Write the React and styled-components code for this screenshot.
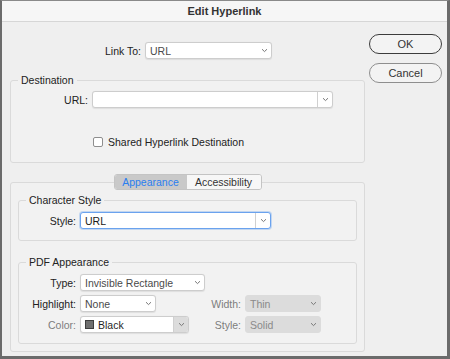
import React from 'react';
import styled, { createGlobalStyle, css } from 'styled-components';

const Global = createGlobalStyle`
  html, body { margin: 0; padding: 0; background: #efefef; }
  body { font-family: "Liberation Sans", Arial, sans-serif; font-size: 10.5px; color: #222; }
  * { box-sizing: border-box; }
`;

const Window = styled.div`
  width: 450px;
  height: 359px;
  background: #efefef;
  border-top: 1px solid #8a8a8a;
  border-left: 2px solid #6b6b6b;
  border-right: 3px solid #6b6b6b;
  border-bottom: 3px solid #6b6b6b;
  display: flex;
  flex-direction: column;
  overflow: hidden;
`;

const TitleBar = styled.div`
  height: 21px;
  flex: none;
  background: #f6f6f6;
  border-bottom: 1px solid #d6d6d6;
  text-align: center;
  font-weight: bold;
  font-size: 11px;
  line-height: 20px;
  color: #333;
`;

const Body = styled.div`
  display: flex;
  padding-left: 8px;
`;

const LeftCol = styled.div`
  width: 355px;
  display: flex;
  flex-direction: column;
`;

const RightCol = styled.div`
  width: 73px;
  margin-left: 4px;
  padding-top: 12px;
  display: flex;
  flex-direction: column;
  gap: 9px;
`;

const Button = styled.button`
  height: 20px;
  width: 73px;
  border-radius: 10px;
  background: #f3f3f3;
  font-family: inherit;
  font-size: 11px;
  color: #333;
  padding: 0;
  border: ${p => (p.$default ? '1.5px solid #3c3c3c' : '1px solid #8e8e8e')};
`;

const Row = styled.div`
  display: flex;
  align-items: center;
  gap: 4px;
  margin-top: ${p => p.$mt || 0}px;
  margin-left: ${p => p.$ml || 0}px;
`;

const Label = styled.span`
  width: ${p => p.$w}px;
  flex: none;
  text-align: right;
  color: ${p => (p.$disabled ? '#7d7d7d' : '#222')};
  white-space: nowrap;
`;

const Group = styled.fieldset`
  margin: ${p => p.$mt || 0}px 0 0 0;
  padding: ${p => p.$pt}px 0 ${p => p.$pb}px 0;
  min-width: 0;
  border: 1px solid #dadada;
  border-radius: 3px;
  background: rgba(255, 255, 255, 0.12);
`;

const Legend = styled.legend`
  margin-left: 7px;
  padding: 0 3px;
  line-height: 12px;
  font-size: 10.5px;
  color: #222;
`;

const SelectBox = styled.div`
  width: ${p => p.$w}px;
  height: 17px;
  flex: none;
  display: flex;
  align-items: stretch;
  border-radius: 3px;
  overflow: hidden;
  ${p =>
    p.$variant === 'disabled'
      ? css`
          background: #dcdcdc;
          border: 1px solid #dcdcdc;
          color: #8a8a8a;
        `
      : p.$variant === 'focus'
      ? css`
          background: #fff;
          border: 1px solid #6aa2ee;
          box-shadow: 0 0 0 1px rgba(106, 162, 238, 0.35);
          color: #1a1a1a;
        `
      : css`
          background: #fff;
          border: 1px solid #cdcdcd;
          box-shadow: 0 0.5px 1px rgba(0, 0, 0, 0.08);
          color: ${p.$dim ? '#4a4a4a' : '#1f1f1f'};
        `}
`;

const SelectText = styled.span`
  flex: 1;
  display: flex;
  align-items: center;
  gap: 4px;
  padding-left: 4px;
  white-space: nowrap;
  overflow: hidden;
`;

const ArrowZone = styled.span`
  flex: none;
  width: ${p => (p.$split ? 15 : 14)}px;
  display: flex;
  align-items: center;
  justify-content: center;
  border-left: ${p => (p.$split ? '1px solid #d0d0d0' : 'none')};
  background: ${p => (p.$grey ? '#dcdcdc' : 'transparent')};
`;

const Swatch = styled.span`
  width: 9px;
  height: 9px;
  background: #6f6f6f;
  border: 1px solid #3e3e3e;
  flex: none;
`;

const Chevron = () => (
  <svg width="7" height="5" viewBox="0 0 7 5">
    <path d="M1 1.2 L3.5 3.6 L6 1.2" fill="none" stroke="#777" strokeWidth="1" />
  </svg>
);

const Select = ({ w, variant, split, grey, dim, children }) => (
  <SelectBox $w={w} $variant={variant} $dim={dim}>
    <SelectText>{children}</SelectText>
    <ArrowZone $split={split} $grey={grey}>
      <Chevron />
    </ArrowZone>
  </SelectBox>
);

const CheckRow = styled.label`
  display: flex;
  align-items: center;
  gap: 5px;
  margin: 28px 0 0 82px;
  height: 12px;
`;

const CheckBox = styled.span`
  width: 10px;
  height: 10px;
  border: 1px solid #8e8e8e;
  border-radius: 2px;
  background: #fff;
  flex: none;
`;

const Panel = styled.div`
  margin-top: 19px;
  border: 1px solid #dadada;
  border-radius: 3px;
  padding: 0 7px 7px;
  display: flex;
  flex-direction: column;
  background: rgba(255, 255, 255, 0.12);
`;

const Tabs = styled.div`
  align-self: center;
  margin-top: -9px;
  display: flex;
  height: 16px;
  border: 1px solid #c4c4c4;
  border-radius: 3px;
  overflow: hidden;
  background: #f7f7f7;
  position: relative;
`;

const Tab = styled.div`
  width: ${p => p.$w}px;
  display: flex;
  align-items: center;
  justify-content: center;
  font-size: 10.5px;
  background: ${p => (p.$active ? '#c9c9c9' : '#f7f7f7')};
  color: ${p => (p.$active ? '#2a7ef0' : '#333')};
`;

const PdfGrid = styled.div`
  display: grid;
  grid-template-columns: 57px 109px 48px 76px;
  grid-auto-rows: 17px;
  column-gap: 4px;
  row-gap: 4px;
  align-items: center;
`;

export default function App() {
  return (
    <>
      <Global />
      <Window>
        <TitleBar>Edit Hyperlink</TitleBar>
        <Body>
          <LeftCol>
            <Row $mt={20}>
              <Label $w={131}>Link To:</Label>
              <Select w={127} dim>URL</Select>
            </Row>

            <Group $mt={15} $pt={5} $pb={14}>
              <Legend>Destination</Legend>
              <Row>
                <Label $w={77}>URL:</Label>
                <Select w={241} split> </Select>
              </Row>
              <CheckRow>
                <CheckBox />
                Shared Hyperlink Destination
              </CheckRow>
            </Group>

            <Panel>
              <Tabs>
                <Tab $w={72} $active>Appearance</Tab>
                <Tab $w={74}>Accessibility</Tab>
              </Tabs>

              <Group $mt={4} $pt={6} $pb={11}>
                <Legend>Character Style</Legend>
                <Row>
                  <Label $w={57}>Style:</Label>
                  <Select w={191} variant="focus" split>URL</Select>
                </Row>
              </Group>

              <Group $mt={15} $pt={6} $pb={10}>
                <Legend>PDF Appearance</Legend>
                <PdfGrid>
                  <Label $w={57}>Type:</Label>
                  <Select w={125} dim>Invisible Rectangle</Select>
                  <span />
                  <span />

                  <Label $w={57}>Highlight:</Label>
                  <Select w={76} dim>None</Select>
                  <Label $w={48} $disabled>Width:</Label>
                  <Select w={76} variant="disabled">Thin</Select>

                  <Label $w={57} $disabled>Color:</Label>
                  <Select w={109} split grey>
                    <Swatch />
                    Black
                  </Select>
                  <Label $w={48} $disabled>Style:</Label>
                  <Select w={76} variant="disabled">Solid</Select>
                </PdfGrid>
              </Group>
            </Panel>
          </LeftCol>
          <RightCol>
            <Button $default>OK</Button>
            <Button>Cancel</Button>
          </RightCol>
        </Body>
      </Window>
    </>
  );
}
